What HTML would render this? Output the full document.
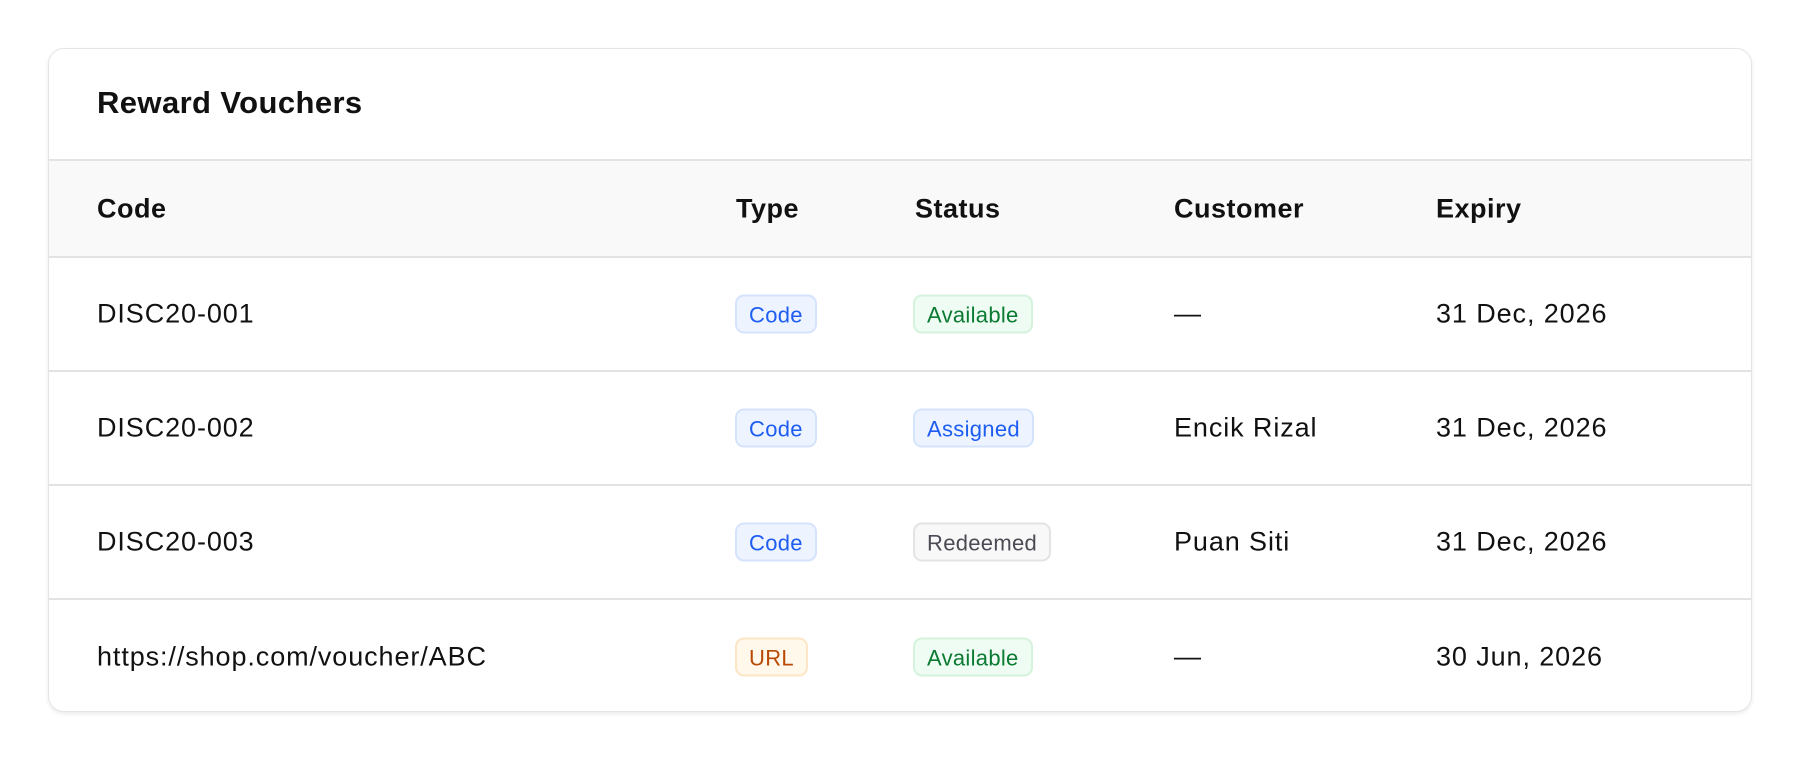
<!DOCTYPE html>
<html><head><meta charset="utf-8"><style>
*{margin:0;padding:0;box-sizing:border-box}
body{width:1800px;height:760px;background:#fff;font-family:"Liberation Sans",sans-serif;color:#111;position:relative;overflow:hidden}
.card{position:absolute;left:48px;top:48px;width:1704px;height:664px;border:1px solid #e4e4e4;border-radius:16px;box-shadow:0 2px 4px rgba(0,0,0,.08);overflow:hidden;background:#fff}
.title{position:absolute;left:48px;top:36px;font-size:31px;font-weight:bold;letter-spacing:.4px}
.head{position:absolute;left:0;top:110px;width:100%;height:99px;background:#f9f9f9;border-top:2px solid #e3e3e3;border-bottom:2px solid #e3e3e3}
.row{position:absolute;left:0;width:100%;height:114px;border-bottom:2px solid #e3e3e3}
.c{position:absolute;top:50%;transform:translateY(-50%);font-size:27px;letter-spacing:.9px;white-space:nowrap}
.head .c{font-weight:bold;letter-spacing:.5px}
.b{display:inline-block;font-size:22px;letter-spacing:.3px;padding:0 12px;height:39px;line-height:37px;border-radius:9px;border:2px solid}
.blue{color:#1d5df2;background:#eef4ff;border-color:#d6e3fd}
.green{color:#0b7a32;background:#effcf3;border-color:#d4f2dc}
.gray{color:#4b4b55;background:#f8f8f8;border-color:#e3e3e3}
.orange{color:#b84a05;background:#fff8eb;border-color:#fde6c6}
</style></head><body>
<div class="card">
<div class="title">Reward Vouchers</div>
<div class="head">
<div class="c" style="left:48px">Code</div>
<div class="c" style="left:687px">Type</div>
<div class="c" style="left:866px">Status</div>
<div class="c" style="left:1125px">Customer</div>
<div class="c" style="left:1387px">Expiry</div>
</div>
<div class="row" style="top:209px">
<div class="c" style="left:48px">DISC20-001</div>
<div class="c" style="left:686px"><span class="b blue">Code</span></div>
<div class="c" style="left:864px"><span class="b green">Available</span></div>
<div class="c" style="left:1125px">—</div>
<div class="c" style="left:1387px">31 Dec, 2026</div>
</div>
<div class="row" style="top:323px">
<div class="c" style="left:48px">DISC20-002</div>
<div class="c" style="left:686px"><span class="b blue">Code</span></div>
<div class="c" style="left:864px"><span class="b blue">Assigned</span></div>
<div class="c" style="left:1125px">Encik Rizal</div>
<div class="c" style="left:1387px">31 Dec, 2026</div>
</div>
<div class="row" style="top:437px">
<div class="c" style="left:48px">DISC20-003</div>
<div class="c" style="left:686px"><span class="b blue">Code</span></div>
<div class="c" style="left:864px"><span class="b gray">Redeemed</span></div>
<div class="c" style="left:1125px">Puan Siti</div>
<div class="c" style="left:1387px">31 Dec, 2026</div>
</div>
<div class="row" style="top:551px;border-bottom:none">
<div class="c" style="left:48px">https://shop.com/voucher/ABC</div>
<div class="c" style="left:686px"><span class="b orange">URL</span></div>
<div class="c" style="left:864px"><span class="b green">Available</span></div>
<div class="c" style="left:1125px">—</div>
<div class="c" style="left:1387px">30 Jun, 2026</div>
</div>
</div>
</body></html>
